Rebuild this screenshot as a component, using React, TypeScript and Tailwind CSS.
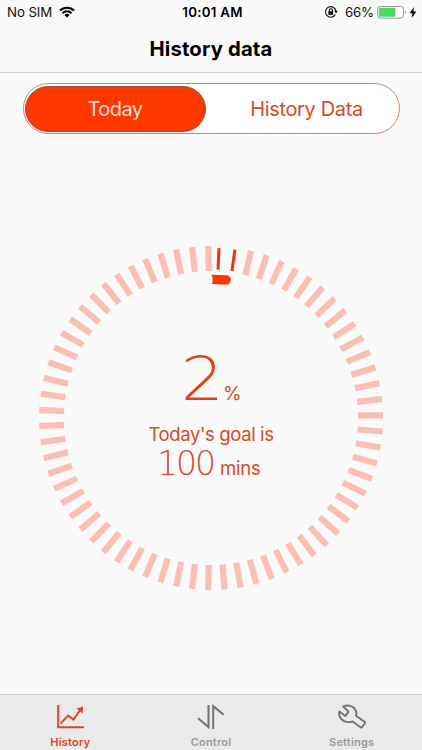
import React from 'react';

const TICK_STEP = 5.4;
const TICK_COUNT = 67;
const DONE_TICKS = 2;

const ticks = Array.from({ length: TICK_COUNT }, (_, i) => ({
    angle: TICK_STEP / 2 + i * TICK_STEP,
    done: i < DONE_TICKS,
}));

const StatusBar: React.FC = () => (
    <div className="grid h-6 grid-cols-3 items-center text-[13.3px] leading-6 text-[#111]">
        <div className="flex items-center pl-[7px]">
            <span className="w-[45px] whitespace-nowrap tracking-[-0.1px]">No SIM</span>
            <svg className="ml-[7px]" width="16" height="12" viewBox="0 0 16 12" fill="none" stroke="#000" strokeWidth="2.1">
                <path d="M1 4.6a10 10 0 0 1 14 0" />
                <path d="M3.4 7.2a6.5 6.5 0 0 1 9.2 0" />
                <path d="M8 11.6 5.4 9a3.7 3.7 0 0 1 5.2 0Z" fill="#000" stroke="none" />
            </svg>
        </div>
        <div className="whitespace-nowrap pl-[3px] text-center text-[13.3px] font-semibold tracking-[0.25px] text-black">10:01 AM</div>
        <div className="flex items-center justify-end pr-[5px]">
            <svg width="14" height="14" viewBox="0 0 14 14" fill="none" stroke="#111" strokeWidth="1.1">
                <path d="M11.3 9.6A5.3 5.3 0 1 1 12 6.3" />
                <path d="M10.2 5.8h3.6L12 8.5Z" fill="#111" stroke="none" />
                <path d="M5.3 6.4V5.2a1.5 1.5 0 0 1 3 0v1.2" />
                <rect x="4.4" y="6.2" width="4.8" height="3.6" fill="#111" stroke="none" />
            </svg>
            <span className="ml-[7px] w-[29px] whitespace-nowrap tracking-[-0.2px]">66%</span>
            <svg className="ml-[3px]" width="30" height="13" viewBox="0 0 30 13">
                <rect x="0.5" y="0.5" width="26" height="11.6" rx="2.8" fill="#fff" stroke="#999" />
                <rect x="1.8" y="1.8" width="16.5" height="9" rx="1" fill="#4cd964" />
                <path d="M28 4.3q2 2 0 4Z" fill="#999" />
            </svg>
            <svg className="ml-[2px]" width="8" height="11" viewBox="0 0 8 11">
                <path d="M5 0 0.6 6.3h2.8L2.6 11 7.4 4.5H4.4Z" fill="#000" />
            </svg>
        </div>
    </div>
);

const GoalRing: React.FC = () => (
    <div className="relative mx-auto mt-[112px] h-[344px] w-[344px]">
        <svg width="344" height="344" viewBox="-172 -172 344 344">
            {ticks.map((tick) => (
                <rect
                    key={tick.angle}
                    x={tick.done ? -1.5 : -3.1}
                    y={tick.done ? -170 : -172}
                    width={tick.done ? 3 : 6.2}
                    height={tick.done ? 21.5 : 25}
                    fill={tick.done ? '#f03408' : '#fabfb2'}
                    transform={`rotate(${tick.angle})`}
                />
            ))}
            <path d="M0.3 -143.3 L16 -142.8 Q19.2 -142 20 -138.4 Q19.2 -134 16 -133.2 L0.6 -134 Q3.2 -138.5 0.3 -143.3 Z" fill="#fc3800" />
        </svg>
        <div className="absolute inset-0 flex flex-col text-[#d84a26]">
            <div className="mt-[103px] flex h-[60px] items-baseline pl-[142px]">
                <span className="w-[42px] origin-left scale-x-[1.12] font-['DejaVu_Sans'] text-[60px] font-extralight leading-[60px] tracking-[-5px] text-[#e63c12]">2</span>
                <span className="text-[19px]">%</span>
            </div>
            <div className="mt-[13px] h-6 whitespace-nowrap text-center text-[18.5px] leading-6 tracking-[-0.38px]">Today&apos;s goal is</div>
            <div className="flex h-9 items-baseline pl-[118px]">
                <span className="w-[63px] font-['DejaVu_Sans'] text-[33px] font-extralight leading-9 tracking-[-2px]">100</span>
                <span className="text-[18.5px] tracking-[-0.2px]">mins</span>
            </div>
        </div>
    </div>
);

const tabs = [
    {
        name: 'History',
        color: 'text-[#dc4526]',
        icon: (
            <svg width="28" height="26" viewBox="0 0 28 26" fill="none" stroke="currentColor" strokeWidth="2">
                <path d="M2.2 1v22.3H28" />
                <path d="M4.5 19.7 12 11.5l5.5 4L25 5" />
                <path d="M20.5 4.6 27 2.5 26.6 9.5Z" fill="currentColor" stroke="none" />
            </svg>
        ),
    },
    {
        name: 'Control',
        color: 'text-[#9a9a9a]',
        icon: (
            <svg className="text-[#737373]" width="28" height="26" viewBox="0 0 28 26" fill="none" stroke="currentColor" strokeWidth="2">
                <path d="M11.5 1v22L1 14.3" />
                <path d="M16.2 25V2.2l10.5 8.6" />
            </svg>
        ),
    },
    {
        name: 'Settings',
        color: 'text-[#9a9a9a]',
        icon: (
            <svg className="text-[#737373]" width="28" height="26" viewBox="0 0 28 26" fill="none" stroke="currentColor" strokeWidth="1.9" strokeLinejoin="round">
                <path d="M5.2 2.5C9 0.7 14 1.3 16.7 4.7c1.7 2.2 2 4.6 1.4 7l8.4 6.1c0.8 0.6 0.8 1.1 0.3 1.8l-2.6 3.4c-0.6 0.7-1.1 0.7-1.8 0.2l-7.7-5.7C8.4 19.4 2.6 16.5 1.3 11.3c-0.3-1.4-0.2-2.5 0.1-3.7l6 4.3 3.1-4.3Z" />
            </svg>
        ),
    },
];

const App: React.FC = () => {
    return (
        <div className="flex h-[750px] w-[422px] flex-col overflow-hidden bg-[#fafafa] font-[Inter,sans-serif]">
            <header className="h-[73px] border-b border-[#d2d2d2] bg-[#f9f9f9]">
                <StatusBar />
                <h1 className="text-center text-[20.3px] font-bold leading-[50px] tracking-[0.15px] text-black">History data</h1>
            </header>

            <main className="flex-1 pt-[10px]">
                <div className="mx-auto flex h-[51px] w-[377px] rounded-full border border-[#dc7f68] bg-white py-[2px] pl-px pr-[2px] text-[20px] leading-[45px]">
                    <div className="flex h-[46px] w-[181px] items-center justify-center rounded-full border border-[#96503c] bg-[#ff3800] pt-px tracking-[-0.6px] text-[#fbdcd2]">Today</div>
                    <div className="flex h-[46px] flex-1 items-center justify-center pl-[11px] pt-px tracking-[-0.35px] text-[#d84a26]">History Data</div>
                </div>
                <GoalRing />
            </main>

            <nav className="grid h-14 grid-cols-3 border-t border-[#cdcdcd] bg-[#eaeaea]">
                {tabs.map((tab) => (
                    <div key={tab.name} className={`flex flex-col items-center pt-[9px] ${tab.color}`}>
                        {tab.icon}
                        <span className="mt-[5px] text-[11px] font-semibold leading-[14px] tracking-[0.2px]">{tab.name}</span>
                    </div>
                ))}
            </nav>
        </div>
    );
};

export default App;
